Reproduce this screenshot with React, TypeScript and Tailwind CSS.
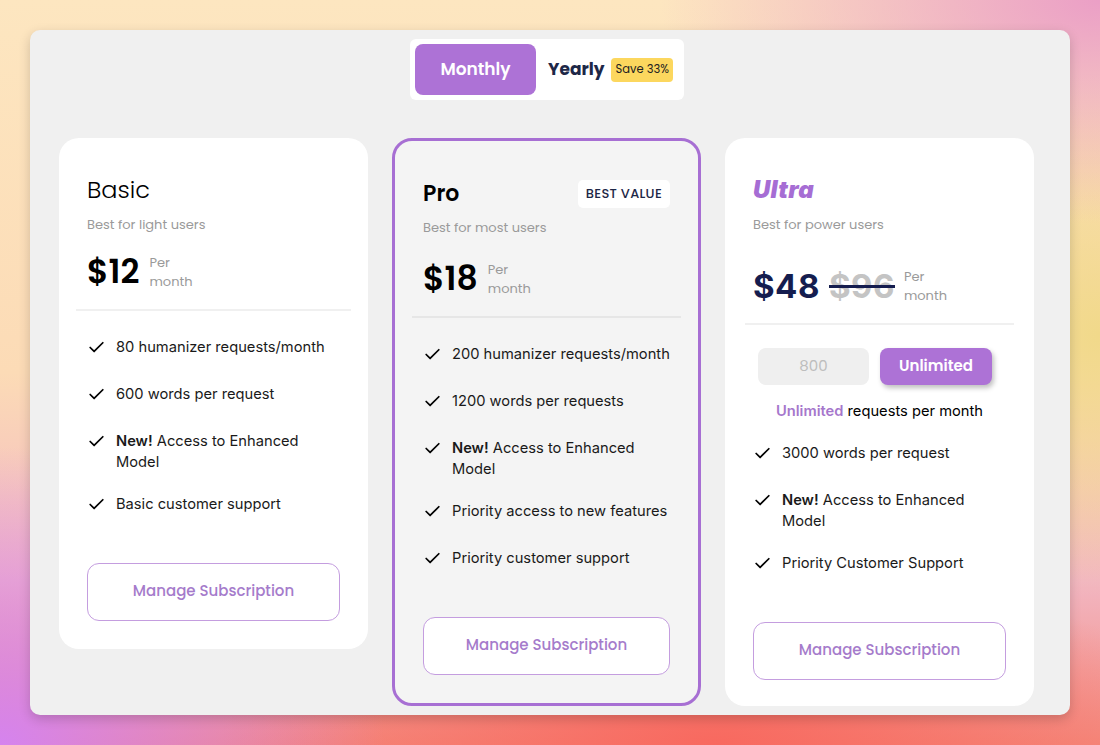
import { Check } from "lucide-react";

const POP = "font-['Poppins','Open_Sans','Lato',sans-serif]";
const BODY = "font-['Inter','Roboto',sans-serif]";

type Feature = { text: string; isNew?: boolean };

const BASIC: Feature[] = [
  { text: "80 humanizer requests/month" },
  { text: "600 words per request" },
  { text: "Access to Enhanced Model", isNew: true },
  { text: "Basic customer support" },
];

const PRO: Feature[] = [
  { text: "200 humanizer requests/month" },
  { text: "1200 words per requests" },
  { text: "Access to Enhanced Model", isNew: true },
  { text: "Priority access to new features" },
  { text: "Priority customer support" },
];

const ULTRA: Feature[] = [
  { text: "3000 words per request" },
  { text: "Access to Enhanced Model", isNew: true },
  { text: "Priority Customer Support" },
];

function FeatureList({ items, first }: { items: Feature[]; first: string }) {
  return (
    <ul className={`flex flex-col gap-[21px] ${first} ${BODY}`}>
      {items.map((f) => (
        <li key={f.text} className="flex items-start gap-[10px] min-h-[26px] text-[14.7px] leading-[21px] text-[#1a1a1a]">
          <Check className="w-[19px] h-[19px] mt-[1px] shrink-0 text-black" strokeWidth={2.2} />
          <span>
            {f.isNew ? <><b className="font-semibold">New!</b> {f.text}</> : f.text}
          </span>
        </li>
      ))}
    </ul>
  );
}

function ManageButton() {
  return (
    <button
      className={`w-full h-[58px] rounded-[12px] border border-[#c49ddf] bg-white text-[15px] font-medium text-[#a57bcb] ${POP}`}
    >
      Manage Subscription
    </button>
  );
}

function PerMonth() {
  return (
    <div className={`flex flex-col text-[13px] leading-[19px] text-[#9a9a9a] ${POP}`}>
      <span>Per</span>
      <span>month</span>
    </div>
  );
}

export default function App() {
  return (
    <div className="w-[1100px] h-[745px] overflow-hidden bg-[radial-gradient(ellipse_40%_30%_at_100%_0%,#eb9fc6_0%,rgba(235,159,198,0)_100%),radial-gradient(ellipse_35%_40%_at_0%_100%,#d583ef_0%,rgba(213,131,239,0)_100%),radial-gradient(ellipse_45%_25%_at_65%_100%,#f8695f_0%,rgba(248,105,95,0)_100%),radial-gradient(ellipse_25%_35%_at_100%_45%,#f1d98a_0%,rgba(241,217,138,0)_100%),linear-gradient(180deg,#fde6c0_0%,#fcdbb6_50%,#f2b6c2_78%,#f48a7c_100%)] pt-[30px] px-[30px]">
      <div className="w-[1040px] h-[685px] rounded-[10px] bg-[#f0f0f0] shadow-[0_4px_12px_rgba(0,0,0,0.18)] relative">
        {/* toggle */}
        <div className="flex justify-center pt-[9px] pr-[6px]">
          <div className="flex items-center bg-white rounded-[6px] p-[5px] w-[274px]">
            <div className={`shrink-0 w-[121px] h-[51px] rounded-[8px] bg-[#ad72d6] text-white text-[17px] font-semibold flex items-center justify-center ${POP}`}>
              Monthly
            </div>
            <span className={`ml-[12px] text-[17px] font-bold text-[#1d2747] ${POP}`}>Yearly</span>
            <span className={`ml-[7px] whitespace-nowrap bg-[#fcd75e] rounded-[4px] px-[4px] h-[24px] flex items-center text-[11.5px] text-[#222] ${POP}`}>
              Save 33%
            </span>
          </div>
        </div>

        {/* cards */}
        <div className="flex items-start gap-[24px] pl-[29px] mt-[38px]">
          {/* Basic */}
          <div className="w-[309px] h-[511px] bg-white rounded-[20px] px-[28px] pt-[36px] flex flex-col">
            <h2 className={`text-[24px] leading-[32px] font-light text-black ${POP}`}>Basic</h2>
            <p className={`mt-[9px] text-[13px] text-[#9a9a9a] ${POP}`}>Best for light users</p>
            <div className="mt-[17px] flex items-center gap-[10px]">
              <span className={`text-[33px] font-semibold text-black leading-[40px] ${POP}`}>$12</span>
              <PerMonth />
            </div>
            <div className="-mx-[11px] mt-[17px] h-[2px] bg-[#f0f0f0]" />
            <FeatureList items={BASIC} first="mt-[26px]" />
            <div className="mt-[43px]">
              <ManageButton />
            </div>
          </div>

          {/* Pro */}
          <div className="w-[309px] h-[568px] bg-[#f4f4f4] rounded-[20px] border-[3px] border-[#a76fd3] px-[28px] pt-[37px] flex flex-col">
            <div className="flex items-center justify-between">
              <h2 className={`text-[22px] leading-[32px] font-semibold text-black ${POP}`}>Pro</h2>
              <span className={`bg-white rounded-[5px] px-[8px] h-[28px] flex items-center text-[13px] font-medium text-[#1d2747] tracking-[0.3px] ${POP}`}>
                BEST VALUE
              </span>
            </div>
            <p className={`mt-[8px] text-[13px] text-[#9a9a9a] ${POP}`}>Best for most users</p>
            <div className="mt-[21px] flex items-center gap-[10px]">
              <span className={`text-[33px] font-semibold text-black leading-[40px] ${POP}`}>$18</span>
              <PerMonth />
            </div>
            <div className="-mx-[11px] mt-[17px] h-[2px] bg-[#e6e6e6]" />
            <FeatureList items={PRO} first="mt-[26px]" />
            <div className="mt-[43px]">
              <ManageButton />
            </div>
          </div>

          {/* Ultra */}
          <div className="w-[309px] h-[568px] bg-white rounded-[20px] px-[28px] pt-[36px] flex flex-col">
            <h2 className="text-[24px] leading-[32px] font-black italic text-[#a66dd4] font-['Inter',sans-serif] tracking-[0.3px]">
              Ultra
            </h2>
            <p className={`mt-[9px] text-[13px] text-[#9a9a9a] ${POP}`}>Best for power users</p>
            <div className="mt-[31px] flex items-center gap-[9px]">
              <span className="text-[33px] font-bold text-[#151d4f] leading-[40px] font-['Inter',sans-serif] tracking-[0.5px]">$48</span>
              <span className="relative text-[33px] font-bold text-[#c4c4c4] leading-[40px] font-['Inter',sans-serif] tracking-[0.5px]">
                $96
                <span className="absolute left-0 right-0 top-[19px] h-[3px] bg-[#151d4f]" />
              </span>
              <PerMonth />
            </div>
            <div className="-mx-[8px] mt-[17px] h-[2px] bg-[#f0f0f0]" />
            <div className="mt-[23px] flex gap-[11px] px-[5px]">
              <div className={`w-[111px] h-[37px] rounded-[8px] bg-[#efefef] text-[#bdbdbd] text-[15px] flex items-center justify-center ${POP}`}>
                800
              </div>
              <div className={`w-[112px] h-[37px] rounded-[8px] bg-[#ad72d6] text-white text-[15px] font-semibold flex items-center justify-center shadow-[2px_3px_5px_rgba(0,0,0,0.25)] ${POP}`}>
                Unlimited
              </div>
            </div>
            <p className={`mt-[15px] text-center text-[14.7px] text-black ${BODY}`}>
              <span className="text-[#a677cc] font-semibold">Unlimited</span> requests per month
            </p>
            <FeatureList items={ULTRA} first="mt-[21px]" />
            <div className="mt-[43px]">
              <ManageButton />
            </div>
          </div>
        </div>
      </div>
    </div>
  );
}
